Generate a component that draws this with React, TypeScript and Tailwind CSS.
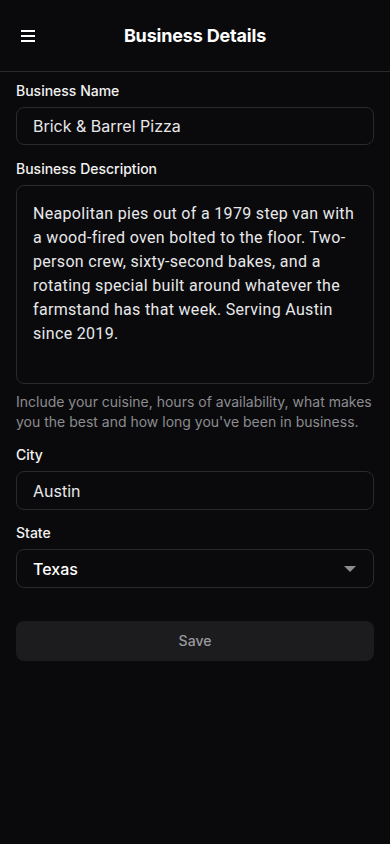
import React, { useState } from 'react';

const fieldClass =
  'w-full rounded-lg border border-[#2a2a2e] bg-[#0a0a0c] px-4 text-base text-[#e8e8ea] outline-none';

export default function App() {
  const [name, setName] = useState('Brick & Barrel Pizza');
  const [description, setDescription] = useState(
    'Neapolitan pies out of a 1979 step van with a wood-fired oven bolted to the floor. Two-person crew, sixty-second bakes, and a rotating special built around whatever the farmstand has that week. Serving Austin since 2019.'
  );
  const [city, setCity] = useState('Austin');
  const [state, setState] = useState('Texas');

  return (
    <div className="min-h-[844px] w-full bg-[#0a0a0c] text-white font-['Inter',sans-serif]">
      {/* Header */}
      <header className="relative flex h-[72px] items-center justify-center border-b border-[#2a2a2e]">
        <button className="absolute left-[19px] top-[27px] flex h-[18px] w-[18px] flex-col justify-center gap-[3px] px-[2px]">
          <span className="block h-[2px] w-full bg-white" />
          <span className="block h-[2px] w-full bg-white" />
          <span className="block h-[2px] w-full bg-white" />
        </button>
        <h1 className="text-lg font-bold tracking-[-0.01em]">Business Details</h1>
      </header>

      <form className="flex flex-col px-4 pt-[9px]" onSubmit={(e) => e.preventDefault()}>
        <label className="mb-[6px] text-sm font-medium text-[#f2f2f2]">Business Name</label>
        <input className={`${fieldClass} h-[38px]`} value={name} onChange={(e) => setName(e.target.value)} />

        <label className="mb-[6px] mt-[14px] text-sm font-medium text-[#f2f2f2]">Business Description</label>
        <textarea
          className="h-[199px] w-full resize-none rounded-lg border border-[#2a2a2e] bg-[#0a0a0c] px-4 py-[16px] font-['Roboto',sans-serif] text-base leading-6 tracking-[0.02em] text-[#e8e8ea] outline-none"
          value={description}
          onChange={(e) => setDescription(e.target.value)}
        />
        <p className="mt-[8px] text-sm leading-5 text-[#8c8c90]">
          Include your cuisine, hours of availability, what makes you the best and how long you've been in business.
        </p>

        <label className="mb-[6px] mt-[13px] text-sm font-medium text-[#f2f2f2]">City</label>
        <input className={`${fieldClass} h-[39px]`} value={city} onChange={(e) => setCity(e.target.value)} />

        <label className="mb-[6px] mt-[13px] text-sm font-medium text-[#f2f2f2]">State</label>
        <div className="relative">
          <select
            className={`${fieldClass} h-[39px] appearance-none font-medium text-white`}
            value={state}
            onChange={(e) => setState(e.target.value)}
          >
            <option>Texas</option>
            <option>California</option>
            <option>New York</option>
          </select>
          <svg
            className="pointer-events-none absolute right-[18px] top-[17px]"
            width="12"
            height="6"
            viewBox="0 0 12 6"
          >
            <path d="M0 0h12L6 6z" fill="#8c8c90" />
          </svg>
        </div>

        <button
          type="submit"
          className="mt-[33px] h-10 w-full rounded-lg bg-[#1c1c1f] text-sm font-medium text-[#9a9a9e]"
        >
          Save
        </button>
      </form>
    </div>
  );
}
